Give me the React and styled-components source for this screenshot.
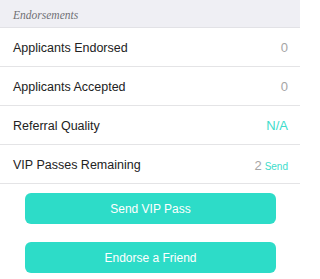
import React from 'react';
import styled, { createGlobalStyle } from 'styled-components';

const GlobalStyle = createGlobalStyle`
    body {
        margin: 0;
        background: #ffffff;
        font-family: "Liberation Sans", Arial, sans-serif;
    }
`;

const Page = styled.div`
    width: 300px;
    height: 279px;
    background: #ffffff;
    overflow: hidden;
`;

const SectionHeader = styled.div`
    height: 28px;
    box-sizing: border-box;
    padding: 2px 13px 0;
    display: flex;
    align-items: center;
    background: #efeff4;
    border-bottom: 1px solid #e2e2e6;
    font-family: "Liberation Serif", "Times New Roman", serif;
    font-style: italic;
    font-size: 11.5px;
    color: #6f6f75;
`;

const Row = styled.div`
    height: 39px;
    box-sizing: border-box;
    padding: 1px 12px 0 13px;
    display: flex;
    align-items: center;
    justify-content: space-between;
    border-bottom: 1px solid #e4e4e6;
`;

const Label = styled.span`
    font-size: 12.5px;
    color: #222222;
`;

const Value = styled.span`
    font-size: 13px;
    color: ${props => props.$accent ? '#3ddccb' : '#a5a5a5'};
`;

const SendLink = styled.span`
    font-size: 10px;
    color: #3ddccb;
    margin-left: 3px;
`;

const Actions = styled.div`
    display: flex;
    flex-direction: column;
    gap: 18px;
    padding: 9px 24px 0 25px;
`;

const ActionButton = styled.button`
    height: 31px;
    border: none;
    border-radius: 6px;
    background: #2ddcc8;
    color: #ffffff;
    font-family: "Liberation Sans", Arial, sans-serif;
    font-size: 12px;
    padding-top: 1px;
    cursor: pointer;
`;

const stats = [
    { label: 'Applicants Endorsed', value: '0' },
    { label: 'Applicants Accepted', value: '0' },
    { label: 'Referral Quality', value: 'N/A', accent: true },
];

const App = () => {
    return (
        <Page>
            <GlobalStyle />
            <SectionHeader>Endorsements</SectionHeader>
            {stats.map(s => (
                <Row key={s.label}>
                    <Label>{s.label}</Label>
                    <Value $accent={s.accent}>{s.value}</Value>
                </Row>
            ))}
            <Row>
                <Label>VIP Passes Remaining</Label>
                <span>
                    <Value>2</Value>
                    <SendLink>Send</SendLink>
                </span>
            </Row>
            <Actions>
                <ActionButton>Send VIP Pass</ActionButton>
                <ActionButton>Endorse a Friend</ActionButton>
            </Actions>
        </Page>
    );
};

export default App;
